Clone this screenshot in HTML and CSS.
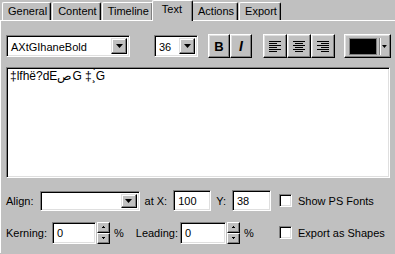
FILE: index.html
```html
<!DOCTYPE html>
<html lang="en">
<head>
  <meta charset="UTF-8" />
  <title>Text Properties</title>
  <link rel="stylesheet" href="styles.css">
</head>
<body>
  <div class="tabs">
    <div class="tab">General</div>
    <div class="tab">Content</div>
    <div class="tab">Timeline</div>
    <div class="tab active">Text</div>
    <div class="tab">Actions</div>
    <div class="tab">Export</div>
  </div>

  <div class="panel">
    <div class="toolbar">
      <div class="combo font-combo">
        <span class="combo-value">AXtGIhaneBold</span>
        <span class="drop-btn"><svg width="7" height="4" viewBox="0 0 7 4"><path d="M0 0h7L3.5 4z" fill="#000"/></svg></span>
      </div>
      <div class="combo size-combo">
        <span class="combo-value">36</span>
        <span class="drop-btn"><svg width="7" height="4" viewBox="0 0 7 4"><path d="M0 0h7L3.5 4z" fill="#000"/></svg></span>
      </div>
      <div class="btn-group style-group">
        <div class="btn bold">B</div>
        <div class="btn italic">I</div>
      </div>
      <div class="btn-group align-group">
        <div class="btn align">
          <svg width="12" height="11" viewBox="0 0 12 11" fill="#000">
            <rect x="0" y="0" width="12" height="1"/><rect x="0" y="2" width="8" height="1"/>
            <rect x="0" y="4" width="12" height="1"/><rect x="0" y="6" width="8" height="1"/>
            <rect x="0" y="8" width="12" height="1"/><rect x="0" y="10" width="8" height="1"/>
          </svg>
        </div>
        <div class="btn align">
          <svg width="12" height="11" viewBox="0 0 12 11" fill="#000">
            <rect x="0" y="0" width="12" height="1"/><rect x="2" y="2" width="8" height="1"/>
            <rect x="0" y="4" width="12" height="1"/><rect x="2" y="6" width="8" height="1"/>
            <rect x="0" y="8" width="12" height="1"/><rect x="2" y="10" width="8" height="1"/>
          </svg>
        </div>
        <div class="btn align">
          <svg width="12" height="11" viewBox="0 0 12 11" fill="#000">
            <rect x="0" y="0" width="12" height="1"/><rect x="4" y="2" width="8" height="1"/>
            <rect x="0" y="4" width="12" height="1"/><rect x="4" y="6" width="8" height="1"/>
            <rect x="0" y="8" width="12" height="1"/><rect x="4" y="10" width="8" height="1"/>
          </svg>
        </div>
      </div>
      <div class="color-btn">
        <span class="swatch"></span>
        <span class="color-sep"></span>
        <svg width="5" height="3" viewBox="0 0 5 3"><path d="M0 0h5L2.5 3z" fill="#000"/></svg>
      </div>
    </div>

    <div class="text-box">‡lfhë?dEصG ‡¸́G</div>

    <div class="row">
      <div class="fields">
        <span class="label">Align:</span>
        <div class="combo align-combo">
          <span class="combo-value"></span>
          <span class="drop-btn"><svg width="7" height="4" viewBox="0 0 7 4"><path d="M0 0h7L3.5 4z" fill="#000"/></svg></span>
        </div>
        <span class="label at-x">at X:</span>
        <div class="field num-x">100</div>
        <span class="label at-y">Y:</span>
        <div class="field num-y">38</div>
      </div>
      <label class="check"><span class="box"></span>Show PS Fonts</label>
    </div>

    <div class="row row-two">
      <div class="fields">
        <span class="label">Kerning:</span>
        <div class="field num-k">0</div>
        <div class="spinner">
          <span class="spin"><svg width="3" height="2" viewBox="0 0 3 2"><path d="M1 0h1v1h1v1H0V1h1z" fill="#000"/></svg></span>
          <span class="spin"><svg width="3" height="2" viewBox="0 0 3 2"><path d="M0 0h3v1H2v1H1V1H0z" fill="#000"/></svg></span>
        </div>
        <span class="pct">%</span>
        <span class="label leading">Leading:</span>
        <div class="field num-l">0</div>
        <div class="spinner">
          <span class="spin"><svg width="3" height="2" viewBox="0 0 3 2"><path d="M1 0h1v1h1v1H0V1h1z" fill="#000"/></svg></span>
          <span class="spin"><svg width="3" height="2" viewBox="0 0 3 2"><path d="M0 0h3v1H2v1H1V1H0z" fill="#000"/></svg></span>
        </div>
        <span class="pct">%</span>
      </div>
      <label class="check"><span class="box"></span>Export as Shapes</label>
    </div>
  </div>
</body>
</html>
```

FILE: styles.css
```css
body {
  margin: 0;
  width: 395px;
  height: 254px;
  background: #c0c0c0;
  font-family: "Liberation Sans", Arial, sans-serif;
  font-size: 11px;
  color: #000;
  overflow: hidden;
}

/* tabs */
.tabs {
  display: flex;
  align-items: flex-end;
  height: 20px;
  padding-left: 2px;
}
.tab {
  position: relative;
  height: 17px;
  line-height: 17px;
  padding: 0 3px 0 5px;
  margin-right: 1px;
  border-top: 1px solid #fff;
  border-left: 1px solid #fff;
  border-right: 1px solid #000;
  border-radius: 2px 2px 0 0;
  box-shadow: inset -1px 0 #808080;
}
.tab.active {
  height: 20px;
  line-height: 16px;
  margin: 0 0 -1px -2px;
  padding: 0 10px 0 9px;
  background: #c0c0c0;
  z-index: 1;
}
.tab.active + .tab {
  margin-left: -1px;
}

/* main panel */
.panel {
  border-top: 1px solid #fff;
  border-left: 1px solid #fff;
  padding: 13px 0 0 5px;
  height: 233px;
  box-sizing: border-box;
}

/* sunken fields */
.combo, .field, .text-box, .box {
  border: 1px solid;
  border-color: #808080 #fff #fff #808080;
  box-shadow: inset 1px 1px #000, inset -1px -1px #dfdfdf;
  background: #fff;
  box-sizing: border-box;
}

/* toolbar */
.toolbar {
  display: flex;
  align-items: center;
  height: 24px;
}
.combo {
  display: flex;
  align-items: stretch;
  padding: 2px;
  height: 22px;
}
.combo-value {
  flex: 1;
  padding-left: 2px;
  line-height: 18px;
  background: #fff;
}
.drop-btn {
  width: 16px;
  display: flex;
  align-items: center;
  justify-content: center;
  background: #c0c0c0;
  border: 1px solid;
  border-color: #dfdfdf #000 #000 #dfdfdf;
  box-shadow: inset -1px -1px #808080, inset 1px 1px #fff;
  box-sizing: border-box;
}
.font-combo {
  width: 124px;
}
.size-combo {
  width: 44px;
  margin-left: 24px;
}
.btn-group {
  display: flex;
}
.style-group {
  margin-left: 10px;
}
.align-group {
  margin-left: 11px;
}
.btn {
  width: 22px;
  height: 24px;
  display: flex;
  align-items: center;
  justify-content: center;
  border: 1px solid;
  border-color: #fff #000 #000 #fff;
  box-shadow: inset -1px -1px #808080, inset 1px 1px #dfdfdf;
  box-sizing: border-box;
  font-size: 13px;
  font-weight: bold;
}
.italic {
  font-style: italic;
  font-size: 14px;
}
.btn.align {
  width: 24px;
}
.color-btn {
  display: flex;
  align-items: center;
  width: 47px;
  height: 24px;
  margin-left: 9px;
  padding: 3px 3px 3px 4px;
  border: 1px solid;
  border-color: #fff #000 #000 #fff;
  box-shadow: inset -1px -1px #808080, inset 1px 1px #dfdfdf;
  box-sizing: border-box;
}
.swatch {
  width: 29px;
  height: 17px;
  background: #000;
  border: 1px solid #808080;
  box-sizing: border-box;
}
.color-sep {
  width: 1px;
  height: 17px;
  margin: 0 2px;
  background: #808080;
  box-shadow: 1px 0 #fff;
}

/* text area */
.text-box {
  margin-top: 9px;
  width: 384px;
  height: 111px;
  padding: 1px 3px;
  font-size: 12px;
  line-height: 14px;
}

/* bottom rows */
.row {
  display: flex;
  align-items: center;
  margin-top: 12px;
  height: 21px;
}
.row-two {
  margin-top: 10px;
  height: 23px;
}
.fields {
  display: flex;
  align-items: center;
  width: 273px;
}
.align-combo {
  width: 100px;
  height: 20px;
  margin-left: 6px;
}
.field {
  height: 21px;
  padding: 2px 4px;
  line-height: 16px;
}
.at-x {
  margin-left: 5px;
}
.num-x {
  width: 38px;
  margin-left: 6px;
}
.at-y {
  margin-left: 5px;
}
.num-y {
  width: 39px;
  margin-left: 6px;
}
.num-k {
  width: 44px;
  height: 22px;
  margin-left: 5px;
}
.num-l {
  width: 46px;
  height: 22px;
  margin-left: 2px;
}
.spinner {
  display: flex;
  flex-direction: column;
  margin-left: 1px;
}
.spin {
  width: 13px;
  height: 11px;
  display: flex;
  align-items: center;
  justify-content: center;
  border: 1px solid;
  border-color: #fff #000 #000 #fff;
  box-shadow: inset -1px -1px #808080;
  box-sizing: border-box;
}
.pct {
  margin-left: 4px;
}
.leading {
  margin-left: 12px;
}
.check {
  display: flex;
  align-items: center;
}
.box {
  width: 13px;
  height: 13px;
  margin-right: 6px;
}
```
